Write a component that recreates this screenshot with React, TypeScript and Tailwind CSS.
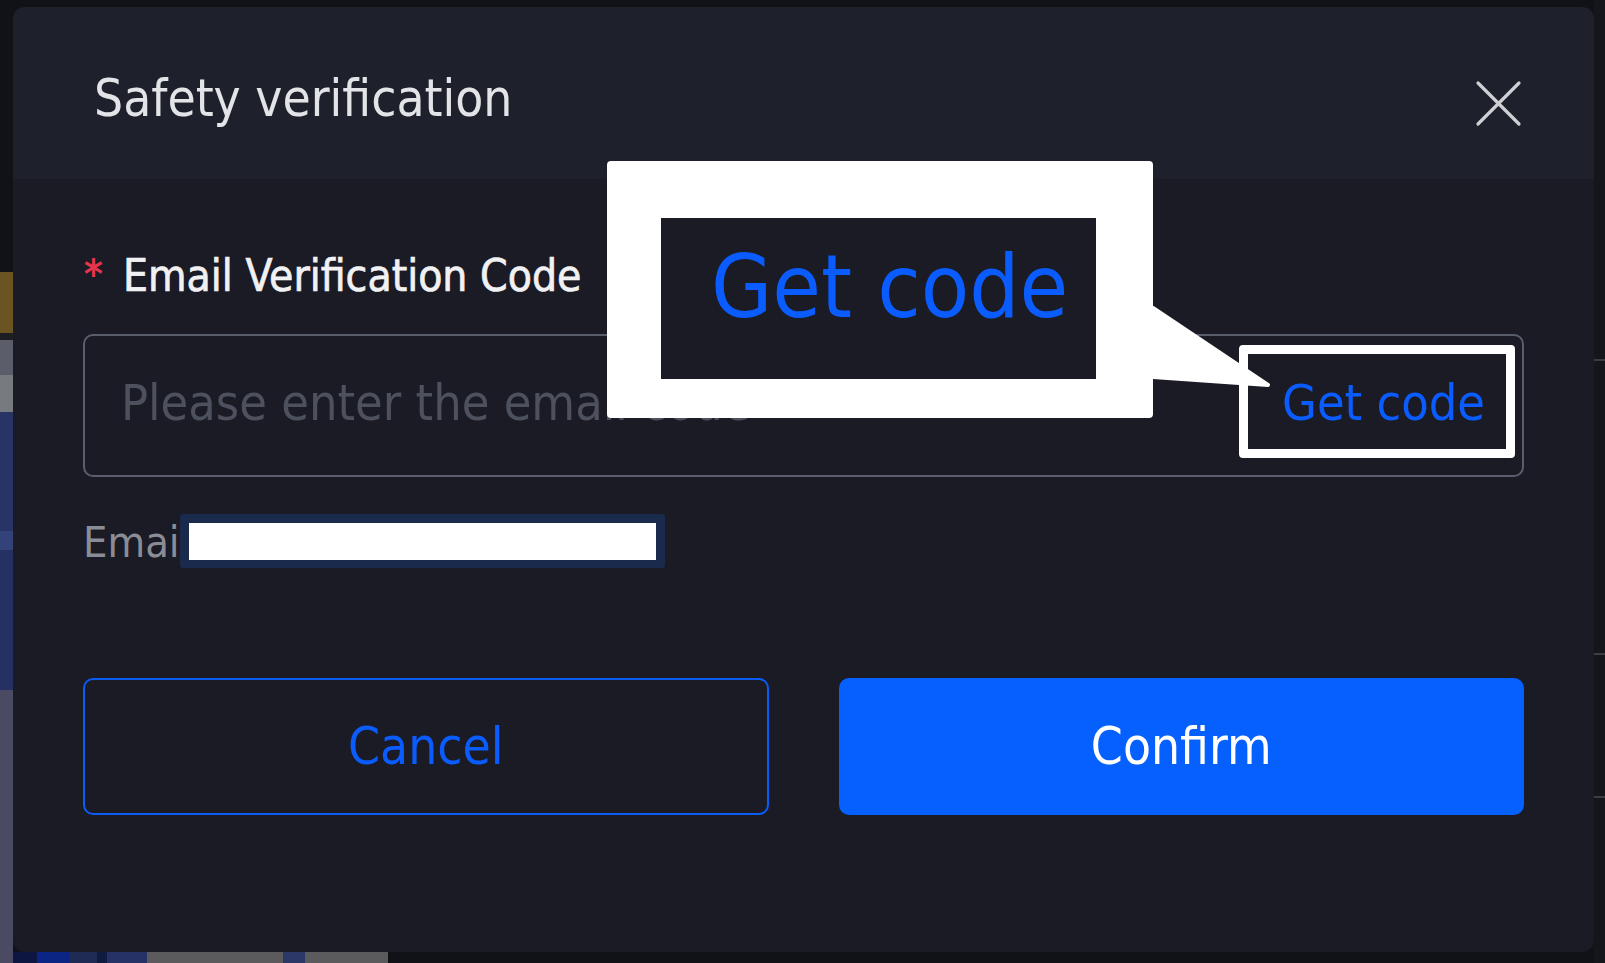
import React from 'react'

const stripLeft = [
  { h: 'h-[272px]', c: 'bg-[#111217]' },
  { h: 'h-[61px]', c: 'bg-[#6a5421]' },
  { h: 'h-[7px]', c: 'bg-[#1d1e24]' },
  { h: 'h-[35px]', c: 'bg-[#5b5d6b]' },
  { h: 'h-[37px]', c: 'bg-[#777a7e]' },
  { h: 'h-[119px]', c: 'bg-[#283366]' },
  { h: 'h-[19px]', c: 'bg-[#34427a]' },
  { h: 'h-[140px]', c: 'bg-[#253063]' },
  { h: 'flex-1', c: 'bg-[#4a4a62]' },
]

const stripBottom = [
  { w: 'w-[24px]', c: 'bg-[#0d1640]' },
  { w: 'w-[33px]', c: 'bg-[#0b2585]' },
  { w: 'w-[27px]', c: 'bg-[#1f2b55]' },
  { w: 'w-[10px]', c: 'bg-[#111a40]' },
  { w: 'w-[40px]', c: 'bg-[#263266]' },
  { w: 'w-[136px]', c: 'bg-[#5b5b5e]' },
  { w: 'w-[22px]', c: 'bg-[#2c3868]' },
  { w: 'w-[83px]', c: 'bg-[#5b5b5e]' },
]

function CloseIcon() {
  return (
    <svg width="47" height="47" viewBox="0 0 47 47" className="mt-[7px] shrink-0">
      <path d="M3 3 L44 44 M44 3 L3 44" stroke="#cfd0d4" strokeWidth="3.2" strokeLinecap="round" />
    </svg>
  )
}

// annotation overlay: enlarged "Get code" with a pointer to the button
function Callout() {
  return (
    <>
      <div className="absolute left-[594px] top-[154px] h-[257px] w-[546px] rounded-[4px] bg-white pl-[54px] pt-[57px]">
        <div className="h-[161px] w-[435px] bg-[#1a1b25] pl-[50px] pt-[25px] text-[88px] leading-none text-[#0a5cff]">
          Get code
        </div>
      </div>
      <svg className="absolute left-[1137px] top-[293px]" width="135" height="100" viewBox="0 0 135 100">
        <path d="M0 8 L3 8 L118 85 L3 77 L0 77 Z" fill="#fff" stroke="#fff" strokeWidth="4" strokeLinejoin="round" />
      </svg>
      <div className="absolute left-[1226px] top-[338px] h-[113px] w-[276px] rounded-[4px] border-[9px] border-white" />
    </>
  )
}

export default function App() {
  return (
    <div className="flex h-[963px] w-[1605px] overflow-hidden bg-[#111217] font-['DejaVu_Sans_Condensed','DejaVu_Sans',sans-serif]">
      <div className="flex w-[13px] shrink-0 flex-col">
        {stripLeft.map((s, i) => (
          <div key={i} className={`${s.h} ${s.c} shrink-0`} />
        ))}
      </div>

      <div className="flex w-[1581px] shrink-0 flex-col">
        <div className="h-[7px] shrink-0" />

        <div className="relative h-[945px] shrink-0 overflow-hidden rounded-[12px] bg-[#1a1b25]">
          <div className="flex h-[172px] items-start justify-between bg-[#1e212c] pl-[81px] pr-[72px] pt-[66px]">
            <h1 className="text-[51px] leading-none text-[#e3e4e7]">Safety verification</h1>
            <CloseIcon />
          </div>

          <div className="flex flex-col px-[70px] pt-[74px]">
            <div className="flex h-[46px] items-start">
              <span className="ml-[1px] mt-[1px] w-[39px] text-[40px] font-bold leading-none text-[#e5354c]">*</span>
              <span className="mt-[1px] text-[44px] leading-none text-[#f1f1f3] [-webkit-text-stroke:0.7px_#f1f1f3]">
                Email Verification Code
              </span>
            </div>

            <div className="mt-[35px] flex h-[143px] items-start justify-between rounded-[10px] border-2 border-[#5a5d6b] pl-[36px] pr-[37px] pt-[42px] text-[50px] leading-none">
              <span className="text-[#4d505d]">Please enter the email code</span>
              <span className="text-[#0a5cff]">Get code</span>
            </div>

            <div className="relative mt-[44px] h-[43px] text-[43px] leading-none text-[#8b8d96]">
              Email:
              <div className="absolute left-[97px] top-[-7px] h-[54px] w-[485px] rounded-[3px] bg-[#1a2a4c] p-[9px]">
                <div className="h-[37px] w-[467px] bg-white" />
              </div>
            </div>

            <div className="mt-[114px] grid h-[137px] grid-cols-2 gap-[70px] text-[51px] leading-none">
              <button className="flex items-center justify-center rounded-[10px] border-2 border-[#0a5cf5] text-[#0a5cff]">
                Cancel
              </button>
              <button className="flex items-center justify-center rounded-[10px] bg-[#0560fd] text-white">
                Confirm
              </button>
            </div>
          </div>

          <Callout />
        </div>

        <div className="flex h-[11px] shrink-0">
          {stripBottom.map((s, i) => (
            <div key={i} className={`${s.w} ${s.c} shrink-0`} />
          ))}
        </div>
      </div>

      <div className="flex w-[11px] shrink-0 flex-col bg-[#15161b]">
        <div className="h-[359px]" />
        <div className="h-[2px] bg-[#3a3c46]" />
        <div className="h-[292px]" />
        <div className="h-[2px] bg-[#3a3c46]" />
        <div className="h-[141px]" />
        <div className="h-[2px] bg-[#3a3c46]" />
      </div>
    </div>
  )
}
